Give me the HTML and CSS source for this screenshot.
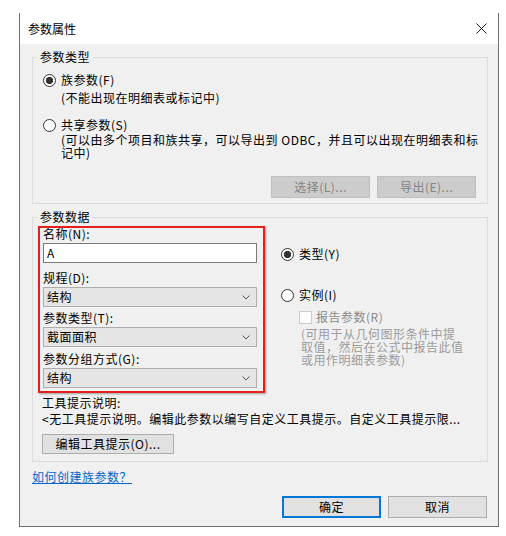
FILE: index.html
```html
<!DOCTYPE html>
<html lang="zh-CN">
<head>
<meta charset="utf-8">
<title>参数属性</title>
<link rel="stylesheet" href="styles.css">
</head>
<body>
<div class="window">
  <div class="titlebar">
    <span class="title">参数属性</span>
    <svg class="close" width="11" height="11" viewBox="0 0 11 11"><path d="M0.5 0.5 L10.5 10.5 M10.5 0.5 L0.5 10.5" stroke="#1a1a1a" stroke-width="1" fill="none"/></svg>
  </div>
  <div class="content">
    <fieldset class="group group-type">
      <legend class="legend legend-type">参数类型</legend>
      <div class="radio-row row-family"><span class="radio checked"></span><span>族参数(F)</span></div>
      <div class="note note-family">(不能出现在明细表或标记中)</div>
      <div class="radio-row row-shared"><span class="radio"></span><span>共享参数(S)</span></div>
      <div class="note note-shared">
        <div class="nline">(可以由多个项目和族共享，可以导出到 ODBC，并且可以出现在明细表和标</div>
        <div class="nline">记中)</div>
      </div>
      <div class="btn-row">
        <button class="btn btn-disabled">选择(L)...</button>
        <button class="btn btn-disabled">导出(E)...</button>
      </div>
    </fieldset>

    <fieldset class="group group-data">
      <legend class="legend legend-data">参数数据</legend>
      <div class="data-row">
        <div class="highlight">
          <div class="field-label">名称(N):</div>
          <div class="textbox">A</div>
          <div class="field-label">规程(D):</div>
          <div class="select sel-1"><span>结构</span><svg width="8" height="5" viewBox="0 0 8 5"><path d="M0.5 0.5 L4 4 L7.5 0.5" stroke="#555" fill="none"/></svg></div>
          <div class="field-label">参数类型(T):</div>
          <div class="select sel-2"><span>截面面积</span><svg width="8" height="5" viewBox="0 0 8 5"><path d="M0.5 0.5 L4 4 L7.5 0.5" stroke="#555" fill="none"/></svg></div>
          <div class="field-label">参数分组方式(G):</div>
          <div class="select sel-3"><span>结构</span><svg width="8" height="5" viewBox="0 0 8 5"><path d="M0.5 0.5 L4 4 L7.5 0.5" stroke="#555" fill="none"/></svg></div>
        </div>
        <div class="scope">
          <div class="radio-row row-typeparam"><span class="radio checked"></span><span>类型(Y)</span></div>
          <div class="radio-row row-instance"><span class="radio"></span><span>实例(I)</span></div>
          <div class="check-row"><span class="checkbox"></span><span>报告参数(R)</span></div>
          <div class="scope-note">
            <div class="nline">(可用于从几何图形条件中提</div>
            <div class="nline">取值，然后在公式中报告此值</div>
            <div class="nline">或用作明细表参数)</div>
          </div>
        </div>
      </div>
      <div class="tooltip">
        <div class="tip-line">工具提示说明:</div>
        <div class="tip-line">&lt;无工具提示说明。编辑此参数以编写自定义工具提示。自定义工具提示限...</div>
        <button class="btn btn-tip">编辑工具提示(O)...</button>
      </div>
    </fieldset>

    <a class="help-link" href="#">如何创建族参数？</a>

    <div class="footer">
      <button class="btn btn-primary">确定</button>
      <button class="btn">取消</button>
    </div>
  </div>
</div>
</body>
</html>
```

FILE: styles.css
```css
* { box-sizing: border-box; }

html, body {
  margin: 0;
  padding: 0;
  background: #ffffff;
}

body {
  font-family: "Noto Sans CJK SC", "Microsoft YaHei", sans-serif;
  font-size: 12px;
  letter-spacing: 0.5px;
  color: #000;
  padding-top: 13px;
  padding-left: 19px;
}

.window {
  width: 480px;
  height: 514px;
  border-left: 1px solid #6f6f6f;
  border-right: 1px solid #6f6f6f;
  border-bottom: 1px solid #6f6f6f;
  display: flex;
  flex-direction: column;
}

.titlebar {
  height: 31px;
  background: #ffffff;
  display: flex;
  align-items: center;
  justify-content: space-between;
  padding: 0 11px 0 8px;
}

.title {
  line-height: 14px;
  letter-spacing: 0;
}

.close {
  display: block;
}

.content {
  flex: 1;
  background: #f0f0f0;
  padding: 6px 10px 8px 12px;
  display: flex;
  flex-direction: column;
}

.group {
  margin: 0;
  border: 1px solid #dcdcdc;
  min-width: 0;
  width: 456px;
}

.legend {
  line-height: 14px;
  padding: 0 3px;
}

.group-type {
  padding: 0 11px 5px 10px;
}

.legend-type {
  margin-left: -6px;
}

.radio-row {
  display: flex;
  align-items: center;
  height: 14px;
  line-height: 14px;
  gap: 5px;
}

.radio {
  width: 13px;
  height: 13px;
  border: 1px solid #333;
  border-radius: 50%;
  background: #fff;
  flex: none;
}

.radio.checked {
  background: radial-gradient(circle, #333 0, #333 3.4px, #fff 3.9px);
}

.row-family { margin-top: 9px; }

.note {
  padding-left: 18px;
}

.note-family {
  margin-top: 4px;
  line-height: 14px;
}

.row-shared { margin-top: 13px; }

.note-shared {
  margin-top: 1px;
}

.nline {
  height: 13px;
  line-height: 13px;
  white-space: nowrap;
}

.btn-row {
  margin-top: 17px;
  display: flex;
  justify-content: flex-end;
  gap: 7px;
}

.btn {
  font-family: inherit;
  font-size: 12px;
  letter-spacing: 0.5px;
  color: #000;
  background: #e1e1e1;
  border: 1px solid #adadad;
  height: 22px;
  width: 99px;
  padding: 0;
  line-height: 18px;
  margin: 0;
}

.btn-disabled {
  background: #cccccc;
  border-color: #bfbfbf;
  color: #838383;
}

.group-data {
  margin-top: 6px;
  padding: 0 10px 7px 5px;
}

.legend-data {
  margin-left: 0;
  padding: 0 2px;
}

.data-row {
  display: flex;
  margin-top: 2px;
}

.highlight {
  width: 227px;
  border: 2px solid #e3201b;
  box-shadow: 1px 1px 2px rgba(0, 0, 0, 0.35);
  padding: 0 6px 3px 3px;
  display: flex;
  flex-direction: column;
}

.field-label {
  line-height: 12px;
  height: 12px;
  margin-bottom: 3px;
  white-space: nowrap;
}

.textbox {
  height: 20px;
  background: #fff;
  border: 1px solid #7a7a7a;
  padding-left: 3px;
  line-height: 18px;
  margin-bottom: 9px;
}

.select {
  height: 20px;
  background: #e5e5e5;
  border: 1px solid #adadad;
  padding: 0 6px 0 3px;
  display: flex;
  align-items: center;
  justify-content: space-between;
  line-height: 18px;
}

.select svg { display: block; }

.sel-1 { margin-bottom: 5px; }
.sel-2 { margin-bottom: 6px; }

.scope {
  margin-left: 16px;
  display: flex;
  flex-direction: column;
}

.row-typeparam { margin-top: 21px; }
.row-instance { margin-top: 27px; }

.check-row {
  margin-top: 8px;
  margin-left: 18px;
  display: flex;
  align-items: center;
  gap: 4px;
  height: 14px;
  line-height: 14px;
  color: #8a8a8a;
}

.checkbox {
  width: 13px;
  height: 13px;
  border: 1px solid #cccccc;
  background: #fdfdfd;
  flex: none;
}

.scope-note {
  margin-top: 3px;
  padding-left: 20px;
  color: #9b9b9b;
}

.tooltip {
  margin-left: 4px;
  margin-top: 2px;
}

.tip-line {
  line-height: 16px;
  white-space: nowrap;
}

.btn-tip {
  margin-top: 7px;
  width: 132px;
  height: 20px;
  line-height: 18px;
  display: block;
}

.help-link {
  margin-top: 8px;
  line-height: 14px;
  color: #0066cc;
  text-decoration: underline;
  align-self: flex-start;
}

.footer {
  margin-top: 12px;
  margin-right: 1px;
  display: flex;
  justify-content: flex-end;
  gap: 7px;
}

.btn-primary {
  border: 2px solid #0078d7;
}
```
